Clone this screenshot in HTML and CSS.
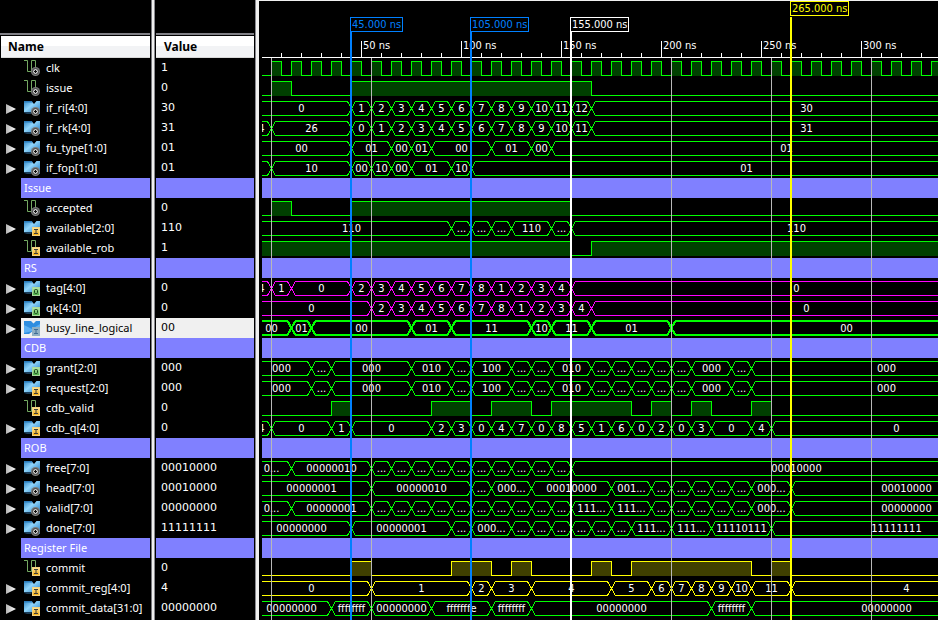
FILE: index.html
```html
<!DOCTYPE html>
<html lang="en">
<head>
<meta charset="utf-8">
<title>Waveform viewer</title>
<link rel="stylesheet" href="styles.css">
</head>
<body>
<svg class="defs" aria-hidden="true">
  <defs>
    <linearGradient id="blue" x1="0" y1="0" x2="1" y2="1">
      <stop offset="0" stop-color="#2f86c8"/><stop offset=".4" stop-color="#8fd4fa"/><stop offset="1" stop-color="#1670b8"/>
    </linearGradient>
    <linearGradient id="gold" x1="0" y1="0" x2="0" y2="1">
      <stop offset="0" stop-color="#ffe9a0"/><stop offset="1" stop-color="#f5a800"/>
    </linearGradient>
    <linearGradient id="leaf" x1="0" y1="0" x2="0" y2="1">
      <stop offset="0" stop-color="#c4efb4"/><stop offset="1" stop-color="#3fa838"/>
    </linearGradient>
    <linearGradient id="arrow" x1="0" y1="0" x2="1" y2="0">
      <stop offset="0" stop-color="#b4b4b4"/><stop offset="1" stop-color="#ffffff"/>
    </linearGradient>
    <symbol id="scalar" viewBox="0 0 16 16">
      <path d="M0 .5H3.500V11.500H7.500V.5H11.500V7" fill="none" stroke="#74a862"/>
    </symbol>
    <symbol id="bus" viewBox="0 0 16 16">
      <path d="M0 1H7.500L10 4L12.500 1H16V14H10L8 12H0Z" fill="url(#blue)"/>
      <path d="M0 1H7.500L9 2.500H0Z" fill="#2a7ab8"/>
      <path d="M0 12H8L7 14H3L0 13Z" fill="#1b3d58"/>
    </symbol>
    <symbol id="bus-selected" viewBox="0 0 16 16">
      <path d="M0 1H7L9.500 3.500L12 1H16V15H12L9 11L5 14H0Z" fill="#2f8ee0"/>
      <path d="M0 5L8 9L16 4V8L9 11L0 13Z" fill="#5cb0f4"/>
    </symbol>
    <symbol id="internal" viewBox="0 0 16 16">
      <circle cx="11.500" cy="11.500" r="4.500" fill="#7c7c7c"/>
      <circle cx="11.500" cy="11.500" r="3" fill="#c8c8c8" stroke="#3c3c3c"/>
      <path d="M10 11.500H13M11.500 10V13" stroke="#101010"/>
    </symbol>
    <symbol id="input" viewBox="0 0 16 16">
      <rect x="8" y="7" width="8" height="9" fill="url(#gold)"/>
      <rect x="8.500" y="7.500" width="7" height="8" fill="none" stroke="#f0d080"/>
      <path d="M10 9.500H14M10 13.500H14M12 9V14" stroke="#3c3c3c" fill="none"/>
    </symbol>
    <symbol id="input-selected" viewBox="0 0 16 16">
      <rect x="8" y="7" width="8" height="9" fill="#8fb0c4"/>
      <path d="M10 9.500H14M10 13.500H14M12 9V14" stroke="#3f6c94" fill="none"/>
    </symbol>
    <symbol id="output" viewBox="0 0 16 16">
      <rect x="8" y="7" width="8" height="9" fill="url(#leaf)"/>
      <rect x="8.500" y="7.500" width="7" height="8" fill="none" stroke="#a8d89c"/>
      <rect x="10.500" y="9.500" width="3" height="4" rx="1" stroke="#17401a" fill="none"/>
    </symbol>
  </defs>
</svg>
<main class="viewer">
  <aside class="signals">
    <table class="signal-table">
      <colgroup><col class="c-tree"><col class="c-name"><col class="c-gap"><col class="c-value"><col class="c-end"></colgroup>
      <thead>
        <tr><th class="head-name" colspan="2"><span>Name</span></th><td></td><th class="head-value"><span>Value</span></th><td></td></tr>
      </thead>
      <tbody id="signals"></tbody>
    </table>
  </aside>
  <section class="waves" aria-label="Waveforms">
    <svg class="ruler" id="ruler"></svg>
    <div id="tracks"></div>
    <div id="markers"></div>
  </section>
</main>
<script src="waves.js"></script>
</body>
</html>
```
FILE: styles.css
```css
* { box-sizing: border-box; }
body {
  margin: 0;
  background: #000;
  color: #fff;
  font-family: "Noto Sans", "Open Sans", sans-serif;
  font-size: 11px;
  overflow: hidden;
}
.defs { position: absolute; width: 0; height: 0; }
.viewer {
  display: grid;
  grid-template-columns: 259px minmax(0, 1fr);
  min-height: 100vh;
}
.signals {
  padding-top: 33px;
  background: linear-gradient(to right,
    #000 151px, #77777c 151px 152px, #f0f0f0 152px 154px, #8a8a90 154px 155px,
    #000 155px 255px, #8a8a90 255px 256px, #f0f0f0 256px);
}
.signal-table {
  width: 100%;
  table-layout: fixed;
  border-collapse: separate;
  border-spacing: 0;
}
.c-tree { width: 21px; }
.c-name { width: 129px; }
.c-gap { width: 6px; }
.c-value { width: 98px; }
.c-end { width: 5px; }
th, td { padding: 0; height: 20px; font-weight: normal; text-align: left; line-height: 20px; white-space: nowrap; }
thead th { height: 25px; border-top: 2px solid #808086; color: #000; vertical-align: bottom; }
thead span {
  display: block;
  height: 22px;
  line-height: 22px;
  padding-left: 8px;
  margin-left: 1px;
  font-size: 12px;
  font-weight: bold;
  background: linear-gradient(#fff 50%, #f2f3f5 50%);
  border-bottom: 1px solid #d8d8d8;
}
.head-name span { padding-left: 7px; }
.head-value span { margin-left: 0; }
.signal { display: flex; align-items: center; height: 20px; gap: 6px; padding-left: 3px; }
.signal-icon { width: 16px; height: 16px; flex: none; }
.value { padding-left: 5px; font-family: "DejaVu Sans", sans-serif; }
.group .band { background: #8080ff; }
.group .title { padding-left: 3px; }
.selected .band { background: #f0f0f0; color: #000; }
.expand {
  display: block;
  margin: 2px 0 0 6px;
  padding: 0;
  width: 10px;
  height: 10px;
  border: 0;
  background: none;
}
.expand svg { display: block; width: 10px; height: 10px; }

.waves {
  position: relative;
  overflow: hidden;
  border-top: 1px solid #f0f0f0;
  padding-left: 3px;
}
.ruler { display: block; width: 100%; height: 57px; }
.ruler text, .track text, .flag { font-family: "DejaVu Sans Condensed", "Noto Sans", sans-serif; font-size: 11px; }
.ruler text { fill: #fff; }
.ruler path { stroke: #fff; fill: none; shape-rendering: crispEdges; }
.track { display: block; width: 100%; height: 20px; overflow: hidden; }
.track.band { background: #8080ff; }
.track text { fill: #fff; text-anchor: middle; }
.line { fill: none; shape-rendering: crispEdges; }
.green .line { stroke: #00ff00; }
.green .fill { fill: #004000; }
.magenta .line { stroke: #ff00ff; }
.yellow .line { stroke: #ffff00; }
.yellow .fill { fill: #404000; }
.thick .line { stroke-width: 2px; }
.gridline { position: absolute; top: 57px; bottom: 0; width: 1px; background: #b8b8b8; }
.cursor { position: absolute; top: 16px; bottom: 0; border-left: 2px solid currentColor; }
.flag {
  position: absolute;
  top: 0;
  left: -2px;
  height: 15px;
  padding: 0 1px;
  border: 1px solid currentColor;
  background: #000;
  line-height: 13px;
  white-space: nowrap;
}
.blue { color: #0080ff; }
.white { color: #fff; }
.active { color: #ffff00; }
.active .flag { top: -16px; }
```
FILE: waves.js
```javascript
// Horizontal scale: 2px per ns. The drawing area starts just after 0 ns.
const START = -5, END = 380;
const px = t => 2 * t - 1;

// Expands "label@time" lists; "~" stands for a value too long to show.
const bus = text => text.split(' ').map(s => {
  const [label, time] = s.split('@');
  return { label: label.replace('~', '...'), time: Number(time) };
});

const clock = [];
for (let t = 5; t < 350; t += 10) clock.push([t, t + 5]);

const rows = [
  { name: 'clk', value: '1', kind: 'internal', high: clock },
  { name: 'issue', value: '0', kind: 'internal', high: [[5, 15], [45, 165]] },
  { name: 'if_ri[4:0]', value: '30', kind: 'internal', bus: bus('0@-5 1@45 2@55 3@65 4@75 5@85 6@95 7@105 8@115 9@125 10@135 11@145 12@155 30@165') },
  { name: 'if_rk[4:0]', value: '31', kind: 'internal', bus: bus('4@-5 26@5 0@45 1@55 2@65 3@75 4@85 5@95 6@105 7@115 8@125 9@135 10@145 11@155 31@165') },
  { name: 'fu_type[1:0]', value: '01', kind: 'internal', bus: bus('00@-5 01@45 00@65 01@75 00@85 01@115 00@135 01@145') },
  { name: 'if_fop[1:0]', value: '01', kind: 'internal', bus: bus('@-5 10@5 00@45 10@55 00@65 01@75 10@95 01@105') },
  { group: 'Issue' },
  { name: 'accepted', value: '0', kind: 'internal', high: [[5, 15], [45, 155]] },
  { name: 'available[2:0]', value: '110', kind: 'input', bus: bus('110@-5 ~@95 ~@105 ~@115 110@125 ~@145 110@155') },
  { name: 'available_rob', value: '1', kind: 'input', high: [[-5, 155], [165, 380]] },
  { group: 'RS' },
  { name: 'tag[4:0]', value: '0', kind: 'output', color: 'magenta', bus: bus('4@-5 1@5 0@15 2@45 3@55 4@65 5@75 6@85 7@95 8@105 1@115 2@125 3@135 4@145 0@155') },
  { name: 'qk[4:0]', value: '0', kind: 'output', color: 'magenta', bus: bus('0@-5 2@55 3@65 4@75 5@85 6@95 7@105 8@115 1@125 2@135 3@145 4@155 0@165') },
  { name: 'busy_line_logical', value: '00', kind: 'input', selected: true, bus: bus('00@-5 01@15 00@25 01@75 11@95 10@135 11@145 01@165 00@205') },
  { group: 'CDB' },
  { name: 'grant[2:0]', value: '000', kind: 'output', bus: bus('000@-5 ~@25 000@35 010@75 ~@95 100@105 ~@125 ~@135 010@145 ~@165 ~@175 ~@185 ~@195 ~@205 000@215 ~@235 000@245') },
  { name: 'request[2:0]', value: '000', kind: 'input', bus: bus('000@-5 ~@25 000@35 010@75 ~@95 100@105 ~@125 ~@135 010@145 ~@165 ~@175 ~@185 ~@195 ~@205 000@215 ~@235 000@245') },
  { name: 'cdb_valid', value: '0', kind: 'input', high: [[35, 45], [85, 105], [115, 135], [145, 185], [195, 205], [215, 225], [245, 255]] },
  { name: 'cdb_q[4:0]', value: '0', kind: 'input', bus: bus('4@-5 0@5 1@35 0@45 2@85 3@95 0@105 4@115 7@125 0@135 8@145 5@155 1@165 6@175 0@185 2@195 0@205 3@215 0@225 4@245 0@255') },
  { group: 'ROB' },
  { name: 'free[7:0]', value: '00010000', kind: 'internal', bus: bus('0~@-5 00000010@15 ~@55 ~@65 ~@75 ~@85 ~@95 ~@105 ~@115 ~@125 ~@135 ~@145 00010000@155') },
  { name: 'head[7:0]', value: '00010000', kind: 'internal', bus: bus('00000001@-5 00000010@55 ~@105 000~@115 00010000@135 001~@175 ~@195 ~@205 ~@215 ~@225 ~@235 000~@245 00010000@265') },
  { name: 'valid[7:0]', value: '00000000', kind: 'internal', bus: bus('0~@-5 00000001@15 ~@55 ~@65 ~@75 ~@85 ~@95 ~@105 ~@115 ~@125 ~@135 ~@145 111~@155 111~@175 ~@195 ~@205 ~@215 ~@225 ~@235 000~@245 00000000@265') },
  { name: 'done[7:0]', value: '11111111', kind: 'internal', bus: bus('00000000@-5 00000001@45 ~@95 000~@105 ~@125 ~@135 ~@145 ~@155 ~@165 ~@175 111~@185 111~@205 11110111@225 11111111@255') },
  { group: 'Register File' },
  { name: 'commit', value: '0', kind: 'input', color: 'yellow', high: [[45, 55], [95, 115], [125, 135], [165, 175], [185, 245], [255, 265]] },
  { name: 'commit_reg[4:0]', value: '4', kind: 'input', color: 'yellow', bus: bus('0@-5 1@55 2@105 3@115 4@135 5@175 6@195 7@205 8@215 9@225 10@235 11@245 4@265') },
  { name: 'commit_data[31:0]', value: '00000000', kind: 'input', bus: bus('00000000@-5 ffffffff@35 00000000@55 fffffffe@85 ffffffff@115 00000000@135 ffffffff@225 00000000@245') },
];

function signalRow(r) {
  if (r.group) {
    return `<tr class="group"><td></td><td class="band title">${r.group}</td><td></td><td class="band"></td><td></td></tr>`;
  }
  const arrow = r.bus
    ? `<button class="expand" aria-label="Expand ${r.name}"><svg viewBox="0 0 10 10"><path d="M0 0L10 5L0 10Z" fill="url(#arrow)"/></svg></button>` : '';
  const suffix = r.selected ? '-selected' : '';
  const base = r.bus ? 'bus' + suffix : 'scalar';
  return `<tr class="${r.selected ? 'selected' : ''}"><td>${arrow}</td>
    <td class="band"><div class="signal"><svg class="signal-icon" aria-hidden="true"><use href="#${base}"/><use href="#${r.kind}${suffix}"/></svg><span>${r.name}</span></div></td>
    <td></td><td class="band value">${r.value}</td><td></td></tr>`;
}

function levelTrack(r) {
  let line = `M${px(START)} 17.5`, fills = '';
  for (const [a, b] of r.high) {
    const x1 = px(a) + 0.5, x2 = px(b) + 0.5;
    line += `H${x1}V3.5H${x2}V17.5`;
    fills += `<rect class="fill" x="${x1}" y="3" width="${x2 - x1}" height="15"/>`;
  }
  return `${fills}<path class="line" d="${line}H${px(END)}"/>`;
}

function busTrack(r) {
  const top = r.selected ? 3 : 3.5, bottom = r.selected ? 17 : 17.5, mid = (top + bottom) / 2;
  let path = '', labels = '';
  r.bus.forEach((seg, i) => {
    const next = r.bus[i + 1];
    const end = next ? next.time : END;
    const a = px(seg.time) + 0.5, b = px(end) + 0.5;
    path += `M${a} ${mid}L${a + 4} ${top}H${b - 4}L${b} ${mid}L${b - 4} ${bottom}H${a + 4}Z`;
    labels += `<text x="${(a + b) / 2}" y="14">${seg.label}</text>`;
  });
  return `<path class="line" d="${path}"/>${labels}`;
}

function track(r) {
  if (r.group) return '<div class="track band"></div>';
  const cls = `track ${r.color || 'green'}${r.selected ? ' thick' : ''}`;
  return `<svg class="${cls}">${r.bus ? busTrack(r) : levelTrack(r)}</svg>`;
}

function ruler() {
  let d = 'M0 56.5H4000', labels = '';
  for (let t = 10; t < 350; t += 10) {
    const major = t % 50 === 0;
    d += `M${px(t) + 0.5} ${major ? 40 : 52}V57`;
    if (major) labels += `<text x="${px(t) + 2}" y="48">${t} ns</text>`;
  }
  return `<path d="${d}"/>${labels}`;
}

function markers() {
  let html = '';
  for (let t = 5; t <= END; t += 50) {
    html += `<div class="gridline" style="left:${px(t) + 3}px"></div>`;
  }
  for (const [t, color] of [[45, 'blue'], [105, 'blue'], [155, 'white'], [265, 'active']]) {
    html += `<div class="cursor ${color}" style="left:${px(t) + 2}px"><span class="flag">${t}.000 ns</span></div>`;
  }
  return html;
}

document.getElementById('signals').innerHTML = rows.map(signalRow).join('');
document.getElementById('tracks').innerHTML = rows.map(track).join('');
document.getElementById('ruler').innerHTML = ruler();
document.getElementById('markers').innerHTML = markers();
```
